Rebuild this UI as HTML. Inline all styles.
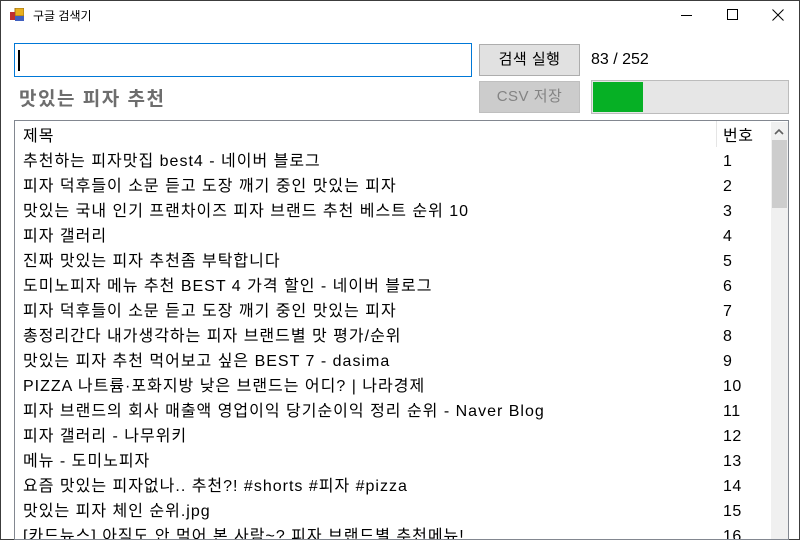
<!DOCTYPE html>
<html><head><meta charset="utf-8"><style>
*{margin:0;padding:0;box-sizing:border-box}
body{width:800px;height:537px;overflow:hidden;background:#fff;font-family:"Liberation Sans","Malgun Gothic","Noto Sans CJK KR",sans-serif;position:relative}
.a{position:absolute}
.title{left:33px;top:7px;font-size:12px;color:#000}
.btn{background:#e1e1e1;border:1px solid #adadad;font-size:15px;text-align:center;line-height:29px;letter-spacing:0.5px}
.list{left:14px;top:120px;width:775px;height:420px;border:1px solid #828790;overflow:hidden}
.rows{position:absolute;left:0;top:1px;width:756px;height:420px}
.row{position:absolute;left:8px;font-size:16px;letter-spacing:1px;color:#000;white-space:nowrap;height:25px;line-height:25px}
.num{position:absolute;left:708px;font-size:16px;letter-spacing:0.5px;height:25px;line-height:25px}
</style></head><body>
<div class="a" style="left:0;top:0;width:800px;height:540px;border:1px solid #3c3c3c"></div>
<svg class="a" style="left:10px;top:8px" width="14" height="14"><rect x="5" y="0" width="9" height="8" fill="#e8b020" stroke="#a07010"/><rect x="0" y="4" width="5" height="8" fill="#c03030"/><rect x="5" y="8" width="9" height="5" fill="#4060c0"/></svg>
<div class="a title">구글 검색기</div>
<div class="a" style="left:681px;top:15px;width:11px;height:1px;background:#000"></div>
<div class="a" style="left:727px;top:9px;width:11px;height:11px;border:1px solid #000"></div>
<svg class="a" style="left:772px;top:9px" width="12" height="12"><path d="M0.5 0.5L11.5 11.5M11.5 0.5L0.5 11.5" stroke="#000" stroke-width="1"/></svg>
<div class="a" style="left:14px;top:43px;width:458px;height:34px;border:1px solid #0078d7"></div>
<div class="a" style="left:18px;top:50px;width:2px;height:21px;background:#000"></div>
<div class="a btn" style="left:479px;top:44px;width:101px;height:32px">검색 실행</div>
<div class="a" style="left:591px;top:51px;font-size:16px">83 / 252</div>
<div class="a" style="left:19px;top:84px;font-size:19px;font-weight:bold;color:#6d6d6d;letter-spacing:1.5px">맛있는 피자 추천</div>
<div class="a btn" style="left:479px;top:81px;width:101px;height:32px;background:#cccccc;border-color:#bfbfbf;color:#838383">CSV 저장</div>
<div class="a" style="left:591px;top:80px;width:198px;height:34px;background:#e6e6e6;border:1px solid #bcbcbc"><div style="position:absolute;left:1px;top:1px;width:50px;height:30px;background:#06b025"></div></div>
<div class="a list">
<div style="position:absolute;left:701px;top:0;width:1px;height:26px;background:#e5e5e5"></div>
<div style="position:absolute;left:756px;top:1px;width:17px;height:420px;background:#f0f0f0"></div>
<svg style="position:absolute;left:758px;top:7px" width="12" height="8"><path d="M2 6L6 2L10 6" stroke="#606060" stroke-width="1.6" fill="none"/></svg>
<div style="position:absolute;left:757px;top:19px;width:15px;height:68px;background:#cdcdcd"></div>
<div class="rows">
<div class="row" style="top:2px">제목</div>
<div class="num" style="top:2px">번호</div>
<div class="row" style="top:27px">추천하는 피자맛집 best4 - 네이버 블로그</div><div class="num" style="top:27px">1</div>
<div class="row" style="top:52px">피자 덕후들이 소문 듣고 도장 깨기 중인 맛있는 피자</div><div class="num" style="top:52px">2</div>
<div class="row" style="top:77px">맛있는 국내 인기 프랜차이즈 피자 브랜드 추천 베스트 순위 10</div><div class="num" style="top:77px">3</div>
<div class="row" style="top:102px">피자 갤러리</div><div class="num" style="top:102px">4</div>
<div class="row" style="top:127px">진짜 맛있는 피자 추천좀 부탁합니다</div><div class="num" style="top:127px">5</div>
<div class="row" style="top:152px">도미노피자 메뉴 추천 BEST 4 가격 할인 - 네이버 블로그</div><div class="num" style="top:152px">6</div>
<div class="row" style="top:177px">피자 덕후들이 소문 듣고 도장 깨기 중인 맛있는 피자</div><div class="num" style="top:177px">7</div>
<div class="row" style="top:202px">총정리간다 내가생각하는 피자 브랜드별 맛 평가/순위</div><div class="num" style="top:202px">8</div>
<div class="row" style="top:227px">맛있는 피자 추천 먹어보고 싶은 BEST 7 - dasima</div><div class="num" style="top:227px">9</div>
<div class="row" style="top:252px">PIZZA 나트륨·포화지방 낮은 브랜드는 어디? | 나라경제</div><div class="num" style="top:252px">10</div>
<div class="row" style="top:277px">피자 브랜드의 회사 매출액 영업이익 당기순이익 정리 순위 - Naver Blog</div><div class="num" style="top:277px">11</div>
<div class="row" style="top:302px">피자 갤러리 - 나무위키</div><div class="num" style="top:302px">12</div>
<div class="row" style="top:327px">메뉴 - 도미노피자</div><div class="num" style="top:327px">13</div>
<div class="row" style="top:352px">요즘 맛있는 피자없나.. 추천?! #shorts #피자 #pizza</div><div class="num" style="top:352px">14</div>
<div class="row" style="top:377px">맛있는 피자 체인 순위.jpg</div><div class="num" style="top:377px">15</div>
<div class="row" style="top:402px">[카드뉴스] 아직도 안 먹어 본 사람~? 피자 브랜드별 추천메뉴!</div><div class="num" style="top:402px">16</div>
</div>
</div>
</body></html>
